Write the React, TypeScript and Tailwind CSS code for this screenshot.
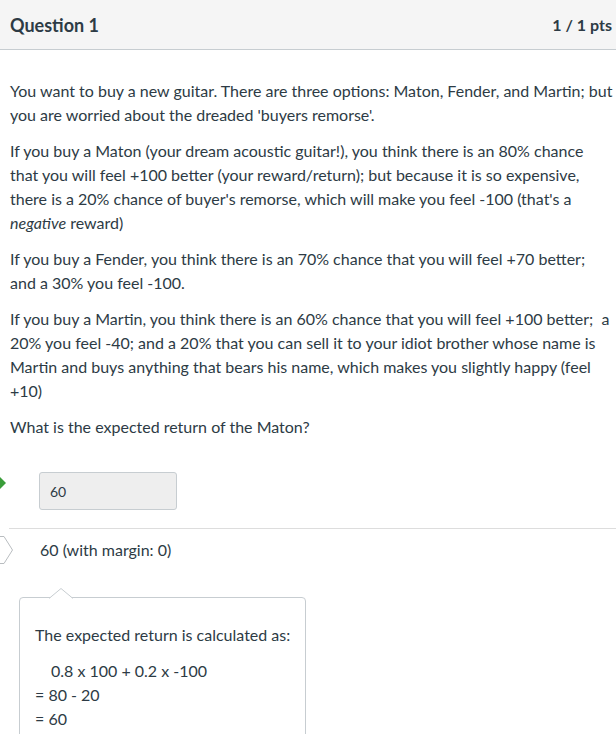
import React from "react";

export default function App() {
  return (
    <div
      className="w-[616px] h-[734px] overflow-hidden bg-white text-[#2d3b45] relative"
      style={{ fontFamily: "Lato, 'Liberation Sans', sans-serif" }}
    >
      <div className="h-[50px] bg-[#f5f5f5] border-b border-[#c7cdd1] flex items-center justify-between pl-[10px] pr-[4px]">
        <div className="text-[18px] font-bold text-[#2d3b45] leading-none">Question 1</div>
        <div className="text-[16px] font-bold text-[#2d3b45] leading-none">1 / 1 pts</div>
      </div>

      <div className="pl-[10px] pr-0 pt-[29px] text-[16px] leading-[24px]">
        <p>
          You want to buy a new guitar. There are three options: Maton, Fender, and Martin; but you are worried about the dreaded 'buyers remorse'.
        </p>
        <p className="mt-[12px] pr-[4px]">
          If you buy a Maton (your dream acoustic guitar!), you think there is an 80% chance that you will feel +100 better (your reward/return); but because it is so expensive, there is a 20% chance of buyer's remorse, which will make you feel -100 (that's a <em>negative</em> reward)
        </p>
        <p className="mt-[12px] pr-[4px]">
          If you buy a Fender, you think there is an 70% chance that you will feel +70 better; and a 30% you feel -100.
        </p>
        <p className="mt-[12px] pr-[4px]">
          If you buy a Martin, you think there is an 60% chance that you will feel +100 better;&nbsp; a 20% you feel -40; and a 20% that you can sell it to your idiot brother whose name is Martin and buys anything that bears his name, which makes you slightly happy (feel +10)
        </p>
        <p className="mt-[12px]">What is the expected return of the Maton?</p>
      </div>

      <div className="relative mt-[33px] flex items-center">
        <svg className="absolute left-0 top-0" width="8" height="24" viewBox="0 0 8 24">
          <polygon points="0,5 6,11 0,17" fill="#3a9d3a" />
        </svg>
        <div className="ml-[39px] w-[138px] h-[38px] bg-[#eeeeee] border border-[#c7cdd1] rounded-[3px] flex items-center pl-[10px] text-[14px]">
          60
        </div>
      </div>

      <div className="mt-[18px] ml-[9px] border-t border-[#dddddd]" />

      <div className="relative mt-[8px] flex items-center h-[25px]">
        <svg className="absolute left-0 top-[-1px]" width="16" height="28" viewBox="0 0 16 28">
          <polygon points="-2,0.5 4,0.5 12.5,14 4,27.5 -2,27.5" fill="#ffffff" stroke="#b9bdc0" strokeWidth="1" />
        </svg>
        <div className="ml-[40px] text-[16px] leading-[24px]">60 (with margin: 0)</div>
      </div>

      <div className="relative mt-[35px] ml-[19px] w-[287px] h-[200px] border border-[#c7cdd1] rounded-[4px] bg-white">
        <svg className="absolute left-[29px] top-[-10px]" width="24" height="11" viewBox="0 0 24 11">
          <polygon points="0,10.5 12,0.5 24,10.5" fill="#ffffff" stroke="#c7cdd1" strokeWidth="1" />
          <rect x="0.5" y="10" width="23" height="2" fill="#ffffff" />
        </svg>
        <div className="pl-[15px] pt-[25px] text-[16px] leading-[24px]">
          <p>The expected return is calculated as:</p>
          <p className="mt-[12px] pl-[16px]">0.8 x 100 + 0.2 x -100</p>
          <p>= 80 - 20</p>
          <p>= 60</p>
        </div>
      </div>
    </div>
  );
}
